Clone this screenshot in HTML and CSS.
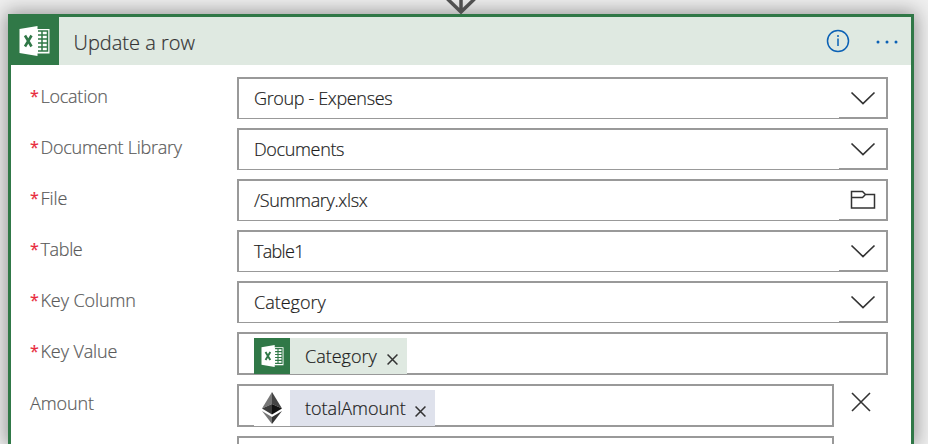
FILE: index.html
```
<!DOCTYPE html>
<html lang="en">
<head>
<meta charset="utf-8">
<title>Update a row</title>
<link rel="stylesheet" href="styles.css">
</head>
<body>
<svg class="defs" width="0" height="0" aria-hidden="true">
  <symbol id="excel" viewBox="0 0 30 30">
    <path fill="#fff" d="M0 3 18 0v30L0 27zM18 3h12v24.500H18z"/>
    <path class="sheet" d="M18.500 5H28v20h-9.500M18.500 9H28M18.500 13H28M18.500 17H28M18.500 21H28M22.500 5v20"/>
    <path class="cross" d="m5.500 9.500 6.500 11M12 9.500l-6.500 11"/>
  </symbol>
  <symbol id="chevron" viewBox="0 0 26 14"><path d="m1.500 1.500 11.500 11 11.500-11"/></symbol>
  <symbol id="close" viewBox="0 0 20 20"><path d="m1 1 18 18M19 1 1 19"/></symbol>
</svg>
<svg class="arrow" width="30" height="14" viewBox="0 0 30 14"><path d="M15 0v12M1.500-1 15 12 28.500-1"/></svg>
<main class="card">
  <header class="head">
    <div class="logo"><svg width="31" height="30"><use href="#excel"/></svg></div>
    <h1 class="title">Update a row</h1>
    <svg class="info" width="24" height="24" viewBox="0 0 24 24"><circle cx="12" cy="12" r="10.500"/><path d="M12 9.500V17M12 6v2"/></svg>
    <svg class="more" width="24" height="6" viewBox="0 0 24 6"><circle cx="3" cy="3" r="1.500"/><circle cx="12" cy="3" r="1.500"/><circle cx="21" cy="3" r="1.500"/></svg>
  </header>
  <div class="form">
    <div class="row"><label class="label"><span class="req">*</span><span class="snug">Location</span></label><div class="field select"><span class="value tight">Group - Expenses</span><div class="drop"><svg width="26" height="14"><use href="#chevron"/></svg></div></div></div>
    <div class="row"><label class="label"><span class="req">*</span><span class="snug">Document Library</span></label><div class="field select"><span class="value tight">Documents</span><div class="drop"><svg width="26" height="14"><use href="#chevron"/></svg></div></div></div>
    <div class="row"><label class="label"><span class="req">*</span><span>File</span></label><div class="field select"><span class="value tight">/Summary.xlsx</span><div class="drop"><svg class="folder" width="26" height="20" viewBox="0 0 26 20"><path d="M1.500 1.500h11l3 3h9v13.500h-23zM1.500 7.500h11l3-3"/></svg></div></div></div>
    <div class="row"><label class="label"><span class="req">*</span><span class="tight">Table</span></label><div class="field select"><span class="value tighter">Table1</span><div class="drop"><svg width="26" height="14"><use href="#chevron"/></svg></div></div></div>
    <div class="row"><label class="label"><span class="req">*</span><span>Key Column</span></label><div class="field select"><span class="value">Category</span><div class="drop"><svg width="26" height="14"><use href="#chevron"/></svg></div></div></div>
    <div class="row tall"><label class="label"><span class="req">*</span><span>Key Value</span></label><div class="field">
      <div class="token category"><div class="badge excel-badge"><svg width="23" height="22"><use href="#excel"/></svg></div><span class="name">Category</span><svg class="remove" width="11" height="11"><use href="#close"/></svg></div>
    </div></div>
    <div class="row tall"><label class="label"><span>Amount</span></label><div class="field short">
      <div class="token total"><div class="badge"><svg class="gem" width="20" height="32" viewBox="0 0 20 32"><path fill="#777" d="M10 0 0 16.500 10 12z"/><path fill="#444" d="m10 0 10 16.500L10 12z"/><path fill="#3c3c3c" d="M0 16.500 10 12v10.500z"/><path fill="#111" d="M20 16.500 10 12v10.500z"/><path fill="#777" d="m0 19 10 6v7z"/><path fill="#333" d="m20 19-10 6v7z"/></svg></div><span class="name">totalAmount</span><svg class="remove" width="11" height="11"><use href="#close"/></svg></div>
    </div><svg class="delete" width="20" height="20"><use href="#close"/></svg></div>
    <div class="row cut"><span class="label"></span><div class="field short"></div></div>
  </div>
</main>
</body>
</html>
```
FILE: styles.css
```
* { box-sizing: border-box; }
body {
  display: flow-root;
  height: 444px;
  margin: 0;
  overflow: hidden;
  background: #efefef;
  font-family: "Open Sans", "Noto Sans", sans-serif;
  font-size: 18px;
  font-weight: 300;
  -webkit-text-stroke: .2px currentColor;
  color: #1c1c1c;
}
svg { display: block; flex: none; fill: none; stroke: #333; stroke-width: 1.700; }
.defs { position: absolute; }
.arrow { position: absolute; left: 446px; top: 0; z-index: 1; stroke: #505050; stroke-width: 3.500; }
.card {
  width: 906px;
  height: 430px;
  margin: 14px 0 0 8px;
  border: 3px solid #307847;
  border-bottom: 0;
  background: #fff;
  box-shadow: 0 0 18px 2px rgba(0, 0, 0, .38);
}
.head { display: flex; align-items: center; height: 48px; background: #dfe9e1; }
.logo {
  width: 51px;
  height: 51px;
  margin: -3px 0 0 -3px;
  padding: 12px 0 0 11px;
  background: #307847;
}
.sheet { stroke: #307847; stroke-width: 1.500; }
.cross { stroke: #307847; stroke-width: 2.600; }
.logo svg, .excel-badge svg, .gem { stroke: none; }
.title { flex: 1; margin: 3px 0 0 14.500px; font-size: 20px; font-weight: 300; line-height: 28px; color: #333; }
.info { margin-right: 25px; stroke: #0b61b5; stroke-width: 1.500; }
.more { margin: 1px 12.500px 0 0; fill: #0b61b5; stroke: none; }
.form { display: flex; flex-direction: column; gap: 9px; padding: 12px 0 0 19px; }
.row { display: flex; height: 42px; }
.tall { height: 43px; }
.cut { height: 8px; }
.label { display: flex; width: 207px; line-height: 24px; padding-top: 7px; letter-spacing: -.1px; color: #5a5a5a; white-space: nowrap; }
.req { width: 10.500px; color: #e8293b; font-size: 16px; font-weight: 400; }
.field { display: flex; width: 651px; border: 2px solid #999; }
.select { border-bottom-width: 1px; }
.short { width: 597px; }
.cut .field { border-bottom: 0; }
.value { flex: 1; padding-left: 15px; line-height: 38px; white-space: nowrap; }
.snug { letter-spacing: -.25px; }
.tight { letter-spacing: -.350px; }
.tighter { letter-spacing: -.7px; }
.drop { display: flex; align-items: center; justify-content: center; width: 47px; border-bottom: 1px solid #999; }
.drop svg { margin-top: -1px; }
.folder { stroke-width: 1.500; }
.token { display: flex; align-items: center; height: 36px; margin: 4px 0 0 15px; }
.category { width: 153px; background: #dfe9e1; }
.total { width: 181px; background: #dfe2ec; }
.badge { display: flex; align-items: center; justify-content: center; width: 36px; height: 36px; background: #fff; }
.excel-badge { background: #307847; }
.name { flex: 1; padding-left: 15px; line-height: 37px; white-space: nowrap; }
.remove { margin: 7px 9px 0 0; stroke-width: 2.800; }
.delete { margin: 8px 0 0 17px; stroke-width: 1.600; }
```
